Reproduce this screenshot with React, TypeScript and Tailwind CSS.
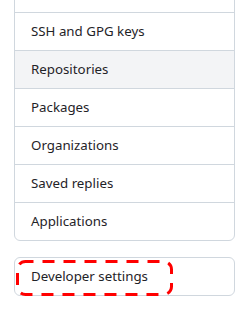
const items = [
  'SSH and GPG keys',
  'Repositories',
  'Packages',
  'Organizations',
  'Saved replies',
  'Applications',
];

export default function App() {
  return (
    <div
      className="h-[311px] w-[252px] overflow-hidden bg-white text-[13.3px] leading-[21px] text-[#1f2328]"
      style={{ fontFamily: '"Noto Sans", "Liberation Sans", sans-serif' }}
    >
      {/* settings menu, scrolled so only the tail of the first row shows */}
      <nav className="-mt-px ml-[14px] w-[221px] overflow-hidden rounded-b-md border border-[#d0d7de]">
        <div className="h-[12px]" />
        {items.map((label) => (
          <a
            key={label}
            className={`block border-t border-[#d0d7de] px-4 py-2 ${
              label === 'Repositories' ? 'bg-[#f3f4f6]' : ''
            }`}
          >
            {label}
          </a>
        ))}
      </nav>

      <nav className="relative ml-[14px] mt-4 w-[221px] rounded-md border border-[#d0d7de]">
        <a className="block px-4 py-2">Developer settings</a>
        {/* annotation highlight */}
        <svg
          className="pointer-events-none absolute left-[1px] top-[2px]"
          width="157"
          height="36"
          viewBox="0 0 157 36"
        >
          <rect
            x="1.5"
            y="1.5"
            width="154"
            height="33"
            rx="8"
            fill="none"
            stroke="#ff0000"
            strokeWidth="3"
            strokeDasharray="12 9"
            strokeDashoffset="4"
          />
        </svg>
      </nav>
    </div>
  );
}
